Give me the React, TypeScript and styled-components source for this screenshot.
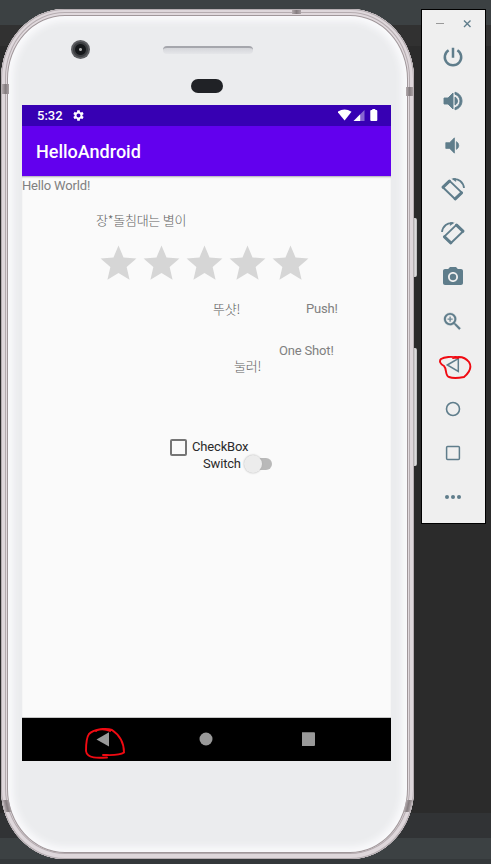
import React from "react";
import styled, { createGlobalStyle } from "styled-components";
import {
  MdPhotoCamera,
  MdSettings,
  MdStar,
  MdVolumeDown,
  MdVolumeUp,
  MdZoomIn,
} from "react-icons/md";

const GlobalStyle = createGlobalStyle`
  * { box-sizing: border-box; }
  body {
    margin: 0;
    background: #2b2b2b;
    font-family: Roboto, "Noto Sans CJK KR", sans-serif;
  }
`;

const Desktop = styled.main`
  display: flex;
  align-items: flex-start;
  width: 491px;
  height: 864px;
  padding: 9px 0 0 1px;
  overflow: hidden;
  background: linear-gradient(
    #3c4143 0 25px, #313131 25px 46px, #2b2b2b 46px 813px,
    #313335 813px 838px, #3c4143 838px 859px, #34383a 859px
  );
`;

const Phone = styled.section`
  position: relative;
  flex: none;
  display: flex;
  flex-direction: column;
  width: 413px;
  height: 850px;
  padding: 0 23px 0 21px;
  border-radius: 64px / 70px;
  background: #ebecee;
  box-shadow:
    inset 0 0 0 1px #b5adb1,
    inset 0 -1px 0 4px #ded7db,
    inset 0 -1px 0 5px #b5acb0,
    inset 0 0 0 6px #e0d9dd,
    inset 0 0 0 7px #a0979a,
    inset 0 0 7px 12px #fafafc;
`;

const SideButton = styled.span<{ $top: number; $height: number }>`
  position: absolute;
  left: 412px;
  top: ${(p) => p.$top}px;
  width: 4px;
  height: ${(p) => p.$height}px;
  border-radius: 0 2px 2px 0;
  background: linear-gradient(90deg, #aaa5a7, #deddde 60%, #b5b5b5);
`;

const AntennaBand = styled.span<{ $x: number; $y: number; $w: number; $h: number; $skew?: number }>`
  position: absolute;
  left: ${(p) => p.$x}px;
  top: ${(p) => p.$y}px;
  width: ${(p) => p.$w}px;
  height: ${(p) => p.$h}px;
  transform: skewX(${(p) => p.$skew ?? 0}deg);
  background: linear-gradient(90deg, #b2aaad, #857d80 50%, #aaa2a5);
`;

const TopBezel = styled.header`
  flex: none;
  display: grid;
  grid-template-columns: 91px 188px 91px;
  grid-template-rows: 96px;
  width: 369px;
  height: 96px;
`;

const Camera = styled.span`
  width: 19px;
  height: 19px;
  margin: 31px 0 0 49px;
  border-radius: 50%;
  background: radial-gradient(circle, #aaa 0 1px, #15171a 2px 5px, #3c3e41 6px 7px, #5c5d61 8px 9px);
`;

const Speaker = styled.div`
  display: flex;
  flex-direction: column;
  gap: 25px;
  padding: 37px 0 0 50px;
`;

const Earpiece = styled.span`
  width: 90px;
  height: 8px;
  border-radius: 4px;
  border-top: 2px solid #a5a6ac;
  background: linear-gradient(#d5d6da, #e5e6e9);
`;

const Sensor = styled.span`
  width: 32px;
  height: 14px;
  margin-left: 28px;
  border-radius: 7px;
  background: #202226;
`;

const Screen = styled.div`
  flex: none;
  display: flex;
  flex-direction: column;
  width: 369px;
  height: 656px;
  background: #fafafa;
`;

const StatusBar = styled.div`
  flex: none;
  display: flex;
  align-items: center;
  height: 21px;
  padding: 0 13px 0 15px;
  color: #fff;
  background: #3700b3;
  font-size: 13px;
  font-weight: 500;

  > svg:nth-of-type(1) { margin-left: 9px; }
`;

const StatusIcons = styled.span`
  display: flex;
  align-items: center;
  margin-left: auto;
`;

const AppBar = styled.h1`
  flex: none;
  display: flex;
  align-items: center;
  height: 50px;
  margin: 0;
  padding: 2px 0 0 14px;
  color: #fff;
  background: #6200ee;
  font-size: 18px;
  line-height: 20px;
  font-weight: 500;
`;

const Content = styled.div`
  flex: 1;
  display: flex;
  flex-direction: column;
  box-shadow: inset 0 2px 2px -1px #aaa7b5;
  padding-top: 2px;
`;

const Line = styled.div<{ $indent?: number; $gap?: number; $strong?: boolean }>`
  flex: none;
  display: flex;
  align-items: center;
  height: 16px;
  margin-top: ${(p) => p.$gap ?? 0}px;
  padding-left: ${(p) => p.$indent ?? 0}px;
  color: ${(p) => (p.$strong ? "#2a2a2a" : "#808080")};
  font-size: 13px;
  line-height: 16px;
  letter-spacing: -0.17px;
  white-space: nowrap;
`;

const Label = styled.span<{ $before?: number }>`
  margin-left: ${(p) => p.$before ?? 0}px;
`;

const Korean = styled.span`
  margin-top: -1px;
  font-family: "Noto Sans CJK KR", sans-serif;
  font-size: 13px;
  font-weight: 300;
  letter-spacing: -0.25px;
  color: #606060;
`;

const Rating = styled.div`
  display: flex;
  height: 43px;
  margin: 14px 0 0 75px;
  color: #d6d6d6;
`;

const CheckSquare = styled.span`
  width: 17px;
  height: 17px;
  border: 2px solid #757575;
  border-radius: 2px;
`;

const SwitchTrack = styled.span`
  display: flex;
  align-items: center;
  width: 27px;
  height: 12px;
  margin: -1px 0 0 4px;
  border-radius: 6px;
  background: #b9b9b9;
`;

const SwitchThumb = styled.span`
  flex: none;
  width: 18px;
  height: 18px;
  margin-left: -1px;
  border-radius: 50%;
  background: #ececec;
  box-shadow: 0 0 2px #aaa;
`;

const NavBar = styled.nav`
  flex: none;
  display: flex;
  align-items: center;
  gap: 88px;
  height: 43px;
  padding-left: 73px;
  background: #000;
  box-shadow: 0 -1px 0 #c5c5c5;
`;

const ToolPanel = styled.aside`
  flex: none;
  width: 65px;
  height: 515px;
  margin-left: 7px;
  padding-top: 8px;
  border: 1px solid #000;
  color: #5f7d8b;
  background: #efefef;
`;

const WindowControls = styled.div`
  display: flex;
  justify-content: space-between;
  width: 37px;
  height: 10px;
  margin: 0 0 7px 13px;
`;

const Tools = styled.div`
  display: grid;
  grid-auto-rows: 44px;
  place-items: center;
  margin-left: -2px;
`;

const ToolButton = styled.button<{ $heavy?: number }>`
  display: grid;
  place-items: center;
  width: 32px;
  height: 32px;
  padding: 0;
  border: 0;
  color: inherit;
  background: none;

  > svg { stroke-width: ${(p) => p.$heavy ?? 0}px; }
  path[fill="none"] { stroke: none; }
`;

const Marked = styled.span`
  position: relative;
  display: grid;
  place-items: center;
`;

const PenMark = styled.svg<{ $x: number; $y: number }>`
  position: absolute;
  left: ${(p) => p.$x}px;
  top: ${(p) => p.$y}px;
  fill: none;
  stroke: #f00a12;
  stroke-width: 1.9;
  stroke-linecap: round;
  stroke-linejoin: round;
`;

function RotateIcon({ mirrored = false }: { mirrored?: boolean }) {
  return (
    <svg width="24" height="24" viewBox="0 0 24 24" fill="none" stroke="currentColor">
      <g transform={mirrored ? "translate(24 0) scale(-1 1)" : undefined}>
        <path d="M8.6 3.9 L1.8 10.3 L14 22 L20.8 15.6 Z" strokeWidth="1.9" strokeLinejoin="round" />
        <path d="M8.4 4.1 L2.1 10.1 M20.5 15.8 L14.2 21.8" strokeWidth="3" strokeLinecap="round" />
        <path d="M12 2.2 C17.5 1.2 22.2 5 23 11" strokeWidth="1.8" />
        <path d="M10.4 1.8 L14.6 .9 L15.2 5Z" fill="currentColor" stroke="none" />
      </g>
    </svg>
  );
}

function DeviceScreen() {
  return (
    <Screen>
      <StatusBar>
        5:32
        <MdSettings size={13} />
        <StatusIcons>
          <svg width="40" height="13" viewBox="0 0 40 13" fill="#fff">
            <path d="M-.5 2.8 Q6.5-2 13.5 2.8 L6.6 11.5Z" />
            <path d="M26.5 1 V12 H22 V5.5Z" opacity=".4" />
            <path d="M15.5 12 L22.2 5.2 V12Z" />
            <path d="M34.3 0 H37.3 V1 H38.3 Q39.3 1 39.3 2 V11 Q39.3 12 38.3 12 H33.3 Q32.3 12 32.3 11 V2 Q32.3 1 33.3 1 H34.3Z" />
          </svg>
        </StatusIcons>
      </StatusBar>
      <AppBar>HelloAndroid</AppBar>
      <Content>
        <Line>Hello World!</Line>
        <Line $gap={18} $indent={74}><Korean>장*돌침대는 별이</Korean></Line>
        <Rating>
          {[1, 2, 3, 4, 5].map((n) => <MdStar key={n} size={43} />)}
        </Rating>
        <Line $gap={16} $indent={191}>
          <Korean>뚜샷!</Korean>
          <Label $before={66}>Push!</Label>
        </Line>
        <Line $gap={26} $indent={257}>One Shot!</Line>
        <Line $gap={-1} $indent={212}><Korean>눌러!</Korean></Line>
        <Line $gap={65} $indent={148} $strong>
          <CheckSquare />
          <Label $before={5}>CheckBox</Label>
        </Line>
        <Line $gap={1} $indent={181} $strong>
          Switch
          <SwitchTrack><SwitchThumb /></SwitchTrack>
        </Line>
      </Content>
      <NavBar>
        <Marked>
          <svg width="15" height="16" viewBox="0 0 15 16" fill="#999">
            <path d="M1.5 7.4 L14 0.3 V14.6Z" />
          </svg>
          <PenMark $x={-10} $y={-5} width="41" height="33" viewBox="0 0 41 33">
            <path d="M25 4 C19 1 9 2 4 7 C1 11 1 20 1 24 C2 32 14 31 22 30.5 M18 28 C25 28 34 29 39 25.5 C39 18 36 9 27 3 C22 1 13 2 11 4" />
          </PenMark>
        </Marked>
        <svg width="16" height="15" viewBox="0 0 16 15"><circle cx="8" cy="7" r="6.5" fill="#999" /></svg>
        <svg width="14" height="15" viewBox="0 0 14 15"><rect x="-1" y="0.2" width="14" height="13.7" rx="1" fill="#999" /></svg>
      </NavBar>
    </Screen>
  );
}

export default function App() {
  return (
    <>
      <GlobalStyle />
      <Desktop>
        <Phone>
          <SideButton $top={209} $height={59} />
          <SideButton $top={339} $height={118} />
          <AntennaBand $x={1} $y={75} $w={7} $h={10} />
          <AntennaBand $x={405} $y={78} $w={7} $h={9} />
          <AntennaBand $x={291} $y={1} $w={9} $h={4} />
          <AntennaBand $x={3} $y={791} $w={6} $h={12} $skew={13} />
          <AntennaBand $x={404} $y={791} $w={6} $h={12} $skew={-13} />
          <TopBezel>
            <Camera />
            <Speaker>
              <Earpiece />
              <Sensor />
            </Speaker>
          </TopBezel>
          <DeviceScreen />
        </Phone>
        <ToolPanel>
          <WindowControls>
            <svg width="10" height="10" viewBox="0 0 10 10" stroke="#999"><path d="M1 5.5H9" /></svg>
            <svg width="10" height="10" viewBox="0 0 10 10" stroke="currentColor" strokeWidth="1.4"><path d="M2 2.5L8.5 9M8.5 2.5L2 9" /></svg>
          </WindowControls>
          <Tools>
            <ToolButton aria-label="Power" $heavy={2.5}>
              <svg width="24" height="24" viewBox="0 0 24 24" stroke="currentColor">
                <g fill="none"><path d="M12 2.8 V12.8 M7.6 5.2 A8.2 8.2 0 1 0 16.4 5.2" /></g>
              </svg>
            </ToolButton>
            <ToolButton aria-label="Volume up" $heavy={0.9}><MdVolumeUp size={24} /></ToolButton>
            <ToolButton aria-label="Volume down" $heavy={0.8}><MdVolumeDown size={23} /></ToolButton>
            <ToolButton aria-label="Rotate left"><RotateIcon /></ToolButton>
            <ToolButton aria-label="Rotate right"><RotateIcon mirrored /></ToolButton>
            <ToolButton aria-label="Screenshot"><MdPhotoCamera size={24} /></ToolButton>
            <ToolButton aria-label="Zoom" $heavy={0.3}><MdZoomIn size={23} /></ToolButton>
            <ToolButton aria-label="Back">
              <Marked>
                <svg width="16" height="16" viewBox="0 0 16 16" fill="none" stroke="currentColor" strokeWidth="1.5">
                  <path d="M2.3 8 L13.3 1.5 V14.5Z" />
                </svg>
                <PenMark $x={-6} $y={-2} width="33" height="25" viewBox="0 0 33 25">
                  <path d="M19 3 C13 1 5 2 2 4 C0 6 1 9 5 11 C8 14 6 21 10 22 C15 24 20 23 25 22 C31 17 33 12 30 7 C26 2 20 1 14 3" />
                </PenMark>
              </Marked>
            </ToolButton>
            <ToolButton aria-label="Home" $heavy={1.6}>
              <svg width="16" height="16" viewBox="0 0 16 16" fill="none" stroke="currentColor"><circle cx="8" cy="8" r="6.5" /></svg>
            </ToolButton>
            <ToolButton aria-label="Overview" $heavy={1.5}>
              <svg width="16" height="16" viewBox="0 0 16 16" fill="none" stroke="currentColor"><rect x="1.6" y="1.6" width="12.8" height="12.8" rx="1" /></svg>
            </ToolButton>
            <ToolButton aria-label="More">
              <svg width="18" height="6" viewBox="0 0 18 6" fill="currentColor"><circle cx="3" cy="3" r="2" /><circle cx="9" cy="3" r="2" /><circle cx="15" cy="3" r="2" /></svg>
            </ToolButton>
          </Tools>
        </ToolPanel>
      </Desktop>
    </>
  );
}
